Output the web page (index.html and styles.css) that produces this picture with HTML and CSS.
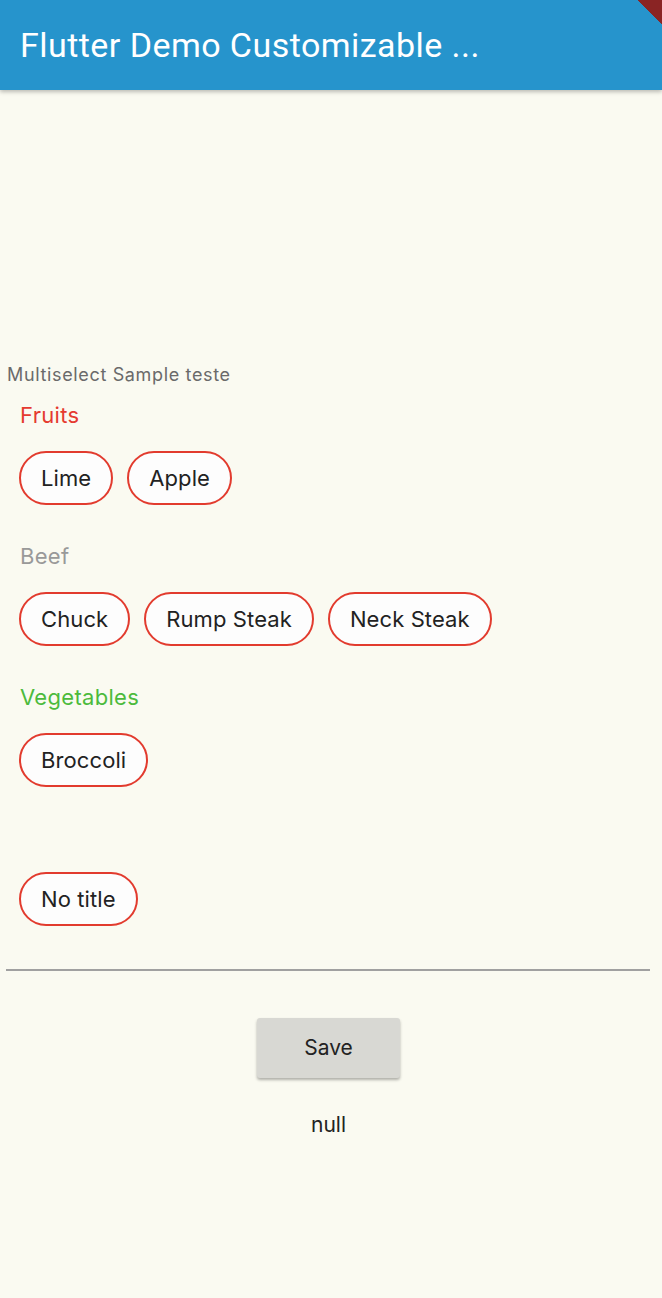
FILE: index.html
```html
<!DOCTYPE html>
<html>
<head>
<meta charset="utf-8">
<link rel="stylesheet" href="styles.css">
</head>
<body>
<header class="appbar">
  <h1 class="appbar-title">Flutter Demo Customizable ...</h1>
  <div class="debug-banner"></div>
</header>
<main class="content">
  <p class="caption">Multiselect Sample teste</p>
  <section class="group">
    <h2 class="group-title title-red">Fruits</h2>
    <div class="chips">
      <span class="chip">Lime</span>
      <span class="chip">Apple</span>
    </div>
  </section>
  <section class="group">
    <h2 class="group-title title-gray">Beef</h2>
    <div class="chips">
      <span class="chip">Chuck</span>
      <span class="chip">Rump Steak</span>
      <span class="chip">Neck Steak</span>
    </div>
  </section>
  <section class="group">
    <h2 class="group-title title-green">Vegetables</h2>
    <div class="chips">
      <span class="chip">Broccoli</span>
    </div>
  </section>
  <section class="group group-last">
    <h2 class="group-title group-title-empty"></h2>
    <div class="chips">
      <span class="chip">No title</span>
    </div>
  </section>
  <hr class="divider">
  <div class="actions">
    <button class="save-btn">Save</button>
    <p class="result">null</p>
  </div>
</main>
</body>
</html>
```
FILE: styles.css
```css
html, body {
  margin: 0;
  padding: 0;
}
body {
  background: #fafaf1;
  font-family: Inter, "Open Sans", "Noto Sans", sans-serif;
  color: #222;
  width: 662px;
  height: 1298px;
  overflow: hidden;
}
.appbar {
  position: relative;
  height: 90px;
  background: #2694cc;
  box-shadow: 0 2px 4px rgba(0,0,0,0.25);
  overflow: hidden;
  display: flex;
  align-items: center;
}
.appbar-title {
  margin: 0 0 0 20px;
  font-family: Roboto, "Noto Sans", sans-serif;
  font-weight: 400;
  font-size: 34px;
  color: #ffffff;
  letter-spacing: 0.45px;
}
.debug-banner {
  position: absolute;
  top: 0;
  right: 0;
  width: 24px;
  height: 24px;
  background: linear-gradient(to bottom left, #8a2424 50%, transparent 52%);
}
.content {
  padding-top: 274px;
}
.caption {
  margin: 0 0 15px 7px;
  font-size: 18px;
  line-height: 22px;
  letter-spacing: 0.65px;
  color: #6a6a6a;
}
.group {
  padding: 0 20px;
  margin-bottom: 37px;
}
.group-last {
  margin-bottom: 43px;
}
.group-title {
  margin: 0 0 22px 0;
  font-weight: 400;
  font-size: 22px;
  line-height: 28px;
  height: 28px;
  letter-spacing: 0.3px;
}
.group-title-empty {
  height: 26px;
}
.title-red { color: #e53a30; }
.title-gray { color: #999; }
.title-green { color: #4cba3c; }
.chips {
  display: flex;
  gap: 14px;
  margin-left: -1px;
}
.chip {
  box-sizing: border-box;
  height: 54px;
  padding: 0 20px;
  border: 2px solid #e23b2e;
  border-radius: 27px;
  background: #fdfdfd;
  font-size: 22px;
  letter-spacing: 0.1px;
  color: #222;
  display: inline-flex;
  align-items: center;
}
.divider {
  margin: 0 12px 0 6px;
  border: 0;
  border-top: 2px solid #a0a0a0;
  height: 0;
}
.actions {
  display: flex;
  flex-direction: column;
  align-items: center;
  padding-top: 47px;
  margin-left: -5px;
}
.save-btn {
  width: 143px;
  height: 60px;
  border: 0;
  border-radius: 3px;
  background: #d8d8d3;
  box-shadow: 0 2px 3px rgba(0,0,0,0.3);
  font-family: Inter, "Open Sans", sans-serif;
  font-size: 21px;
  color: #222;
  padding-bottom: 3px;
}
.result {
  margin: 33px 0 0 0;
  font-size: 21px;
  line-height: 28px;
}
```
